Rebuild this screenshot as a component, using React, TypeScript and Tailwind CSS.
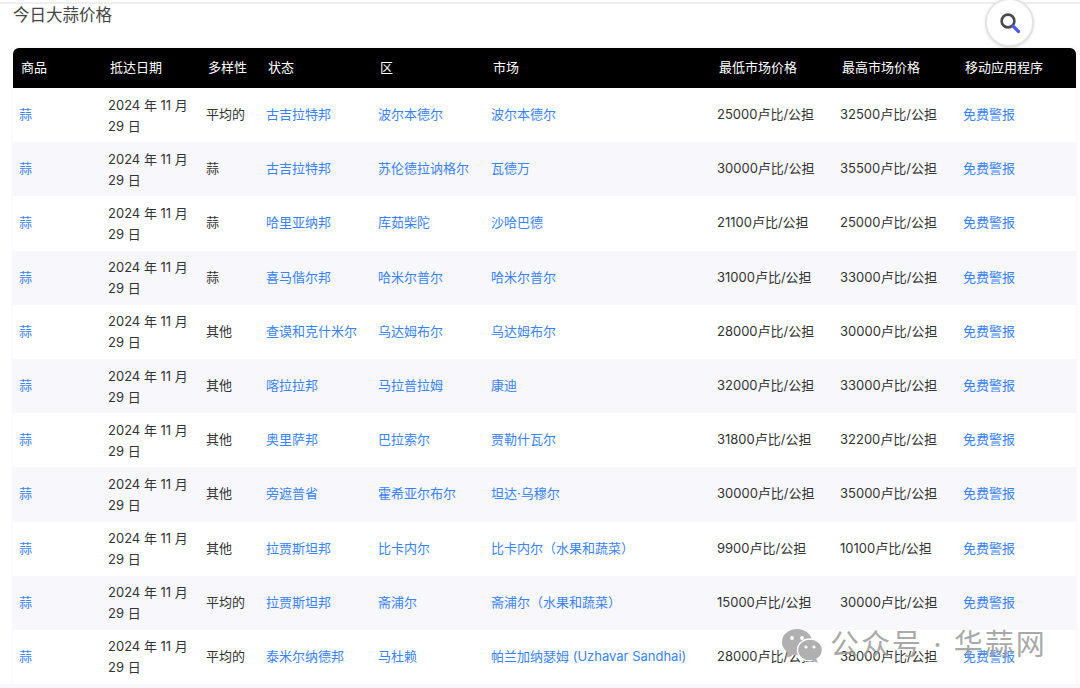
const FONT = "font-['Inter','Noto_Sans_CJK_SC',sans-serif]";

const columns = ['商品', '抵达日期', '多样性', '状态', '区', '市场', '最低市场价格', '最高市场价格', '移动应用程序'];

const widths = ['w-[89px]', 'w-[98px]', 'w-[60px]', 'w-[112px]', 'w-[113px]', 'w-[226px]', 'w-[123px]', 'w-[123px]', 'w-[119px]'];

const rows = [
  ['平均的', '古吉拉特邦', '波尔本德尔', '波尔本德尔', '25000', '32500'],
  ['蒜', '古吉拉特邦', '苏伦德拉讷格尔', '瓦德万', '30000', '35500'],
  ['蒜', '哈里亚纳邦', '库茹柴陀', '沙哈巴德', '21100', '25000'],
  ['蒜', '喜马偕尔邦', '哈米尔普尔', '哈米尔普尔', '31000', '33000'],
  ['其他', '查谟和克什米尔', '乌达姆布尔', '乌达姆布尔', '28000', '30000'],
  ['其他', '喀拉拉邦', '马拉普拉姆', '康迪', '32000', '33000'],
  ['其他', '奥里萨邦', '巴拉索尔', '贾勒什瓦尔', '31800', '32200'],
  ['其他', '旁遮普省', '霍希亚尔布尔', '坦达·乌穆尔', '30000', '35000'],
  ['其他', '拉贾斯坦邦', '比卡内尔', '比卡内尔（水果和蔬菜）', '9900', '10100'],
  ['平均的', '拉贾斯坦邦', '斋浦尔', '斋浦尔（水果和蔬菜）', '15000', '30000'],
  ['平均的', '泰米尔纳德邦', '马杜赖', '帕兰加纳瑟姆 (Uzhavar Sandhai)', '28000', '38000'],
];

function SearchIcon() {
  return (
    <svg width="24" height="24" viewBox="0 0 24 24" fill="none">
      <circle cx="10" cy="10" r="6.4" stroke="#4a4a4a" strokeWidth="2.6" />
      <path d="M15 15 L20.5 20.5" stroke="#4f5bf0" strokeWidth="3.2" strokeLinecap="round" />
    </svg>
  );
}

function WechatMark() {
  return (
    <svg width="42" height="36" viewBox="0 0 42 36">
      <ellipse cx="16" cy="15" rx="15" ry="13" fill="#b0b0b0" />
      <path d="M7 24 L5 31 L13 27 Z" fill="#b0b0b0" />
      <circle cx="11" cy="11" r="1.9" fill="#fff" />
      <circle cx="21" cy="11" r="1.9" fill="#fff" />
      <ellipse cx="29" cy="23" rx="12.5" ry="11" fill="#b0b0b0" stroke="#fff" strokeWidth="1.4" />
      <path d="M35 31 L37 36 L30 33 Z" fill="#b0b0b0" />
      <circle cx="25" cy="20" r="1.6" fill="#fff" />
      <circle cx="33" cy="20" r="1.6" fill="#fff" />
    </svg>
  );
}

export default function App() {
  return (
    <div className={`relative h-[688px] w-[1080px] overflow-hidden bg-white ${FONT}`}>
      <div className="mt-[2px] h-[2px] bg-[#eeeeee]" />
      <h1 className="ml-[13px] h-[44px] text-[16.5px] leading-[22px] text-[#444444]">今日大蒜价格</h1>

      <div className="mx-[13px] w-[1063px] shadow-[0_0_4px_#f0f0f6]">
        <table className="w-full table-fixed border-separate border-spacing-0 text-[13px]">
          <colgroup>
            {widths.map((w, i) => (
              <col key={i} className={w} />
            ))}
          </colgroup>
          <thead>
            <tr className="h-[40px] bg-black text-white">
              {columns.map((c, i) => (
                <th
                  key={c}
                  className={`px-[8px] text-left font-normal ${i === 0 ? 'rounded-tl-[6px]' : ''} ${i === 8 ? 'rounded-tr-[6px]' : ''}`}
                >
                  {c}
                </th>
              ))}
            </tr>
          </thead>
          <tbody>
            {rows.map((r, i) => (
              <tr key={i} className={`h-[54.2px] leading-[21px] ${i % 2 === 1 ? 'bg-[#f7f7fc]' : 'bg-white'}`}>
                <td className="px-[6px] pb-[1px] text-[#3b82f6]">蒜</td>
                <td className="px-[6px] pt-[1px] text-[#333333]">2024 年 11 月 29 日</td>
                <td className="px-[6px] pb-[1px] text-[#333333]">{r[0]}</td>
                <td className="px-[6px] pb-[1px] text-[#3b82f6]">{r[1]}</td>
                <td className="px-[6px] pb-[1px] text-[#3b82f6]">{r[2]}</td>
                <td className="px-[6px] pb-[1px] text-[#3b82f6]">{r[3]}</td>
                <td className="px-[6px] pb-[1px] text-[#333333]">{r[4]}卢比/公担</td>
                <td className="px-[6px] pb-[1px] text-[#333333]">{r[5]}卢比/公担</td>
                <td className="px-[6px] pb-[1px] text-[#3b82f6]">免费警报</td>
              </tr>
            ))}
          </tbody>
        </table>
      </div>
      <div className="h-[10px] bg-[#f7f7fc]" />

      <div className="absolute left-[985px] top-[-2px] flex h-[49px] w-[49px] items-center justify-center rounded-full border-2 border-[#e4e4e4] bg-white shadow-sm">
        <SearchIcon />
      </div>

      <div className="absolute left-[781px] top-[626px] flex items-center gap-[7px] text-[#9a9a9a]/85">
        <WechatMark />
        <span className="whitespace-nowrap text-[29px] leading-[38px] tracking-[2px]">公众号 · 华蒜网</span>
      </div>
    </div>
  );
}
